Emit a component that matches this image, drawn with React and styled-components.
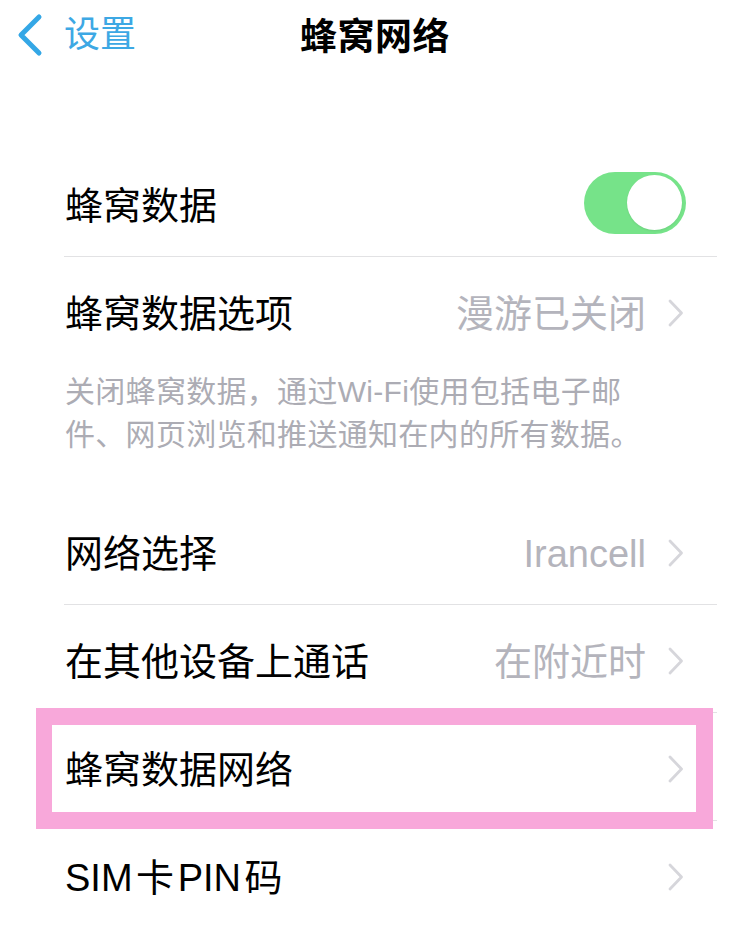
import * as React from 'react';
import styled, { createGlobalStyle } from 'styled-components';

const GlobalStyle = createGlobalStyle`
  html, body {
    margin: 0;
    padding: 0;
    background: #ffffff;
  }
  body {
    font-family: "Liberation Sans", "Noto Sans CJK SC", sans-serif;
    -webkit-font-smoothing: antialiased;
  }
`;

const Chevron = ({ color = '#d6d6db' }) => (
  <ChevronSvg viewBox='0 0 16 28' fill='none'>
    <path d='M2 2 L13.5 14 L2 26' stroke={color} strokeWidth='2.8' strokeLinecap='round' strokeLinejoin='round' />
  </ChevronSvg>
);

const BackArrow = () => (
  <BackSvg viewBox='0 0 28 44' fill='none'>
    <path d='M23 4 L5 22 L23 40' stroke='#34a7e6' strokeWidth='5' strokeLinecap='round' strokeLinejoin='round' />
  </BackSvg>
);

const Row = ({ label, value, chevron = true, toggle, last, highlighted }) => (
  <RowWrapper>
    <RowInner $last={last}>
      <Label>{label}</Label>
      <Trailing>
        {value && <Value>{value}</Value>}
        {toggle && (
          <Toggle>
            <Knob />
          </Toggle>
        )}
        {chevron && !toggle && <Chevron />}
      </Trailing>
    </RowInner>
    {highlighted && <Highlight />}
  </RowWrapper>
);

const App = () => {
  return (
    <Page>
      <GlobalStyle />
      <NavBar>
        <BackButton>
          <BackArrow />
          <BackText>设置</BackText>
        </BackButton>
        <Title>蜂窝网络</Title>
      </NavBar>

      <Group $top={81}>
        <Row label='蜂窝数据' toggle />
        <Row label='蜂窝数据选项' value='漫游已关闭' last />
      </Group>
      <Footer>
        关闭蜂窝数据，通过Wi-Fi使用包括电子邮件、网页浏览和推送通知在内的所有数据。
      </Footer>

      <Group $top={0}>
        <Row label='网络选择' value='Irancell' />
        <Row label='在其他设备上通话' value='在附近时' />
        <Row label='蜂窝数据网络' highlighted />
        <Row label='SIM 卡 PIN 码' last />
      </Group>
    </Page>
  );
};

export default App;

/* STYLED COMPONENTS */
const Page = styled.div`
  width: 750px;
  min-height: 933px;
  background: #ffffff;
  overflow: hidden;
`;

const NavBar = styled.div`
  position: relative;
  height: 68px;
  margin-bottom: 2px;
  display: flex;
  align-items: center;
  justify-content: center;
`;

const BackButton = styled.div`
  position: absolute;
  left: 16px;
  top: 0;
  height: 70px;
  display: flex;
  align-items: center;
  gap: 20px;
`;

const BackSvg = styled.svg`
  width: 28px;
  height: 44px;
`;

const BackText = styled.span`
  font-size: 36px;
  color: #3da8e4;
  line-height: 1;
`;

const Title = styled.h1`
  margin: 0;
  font-size: 37px;
  font-weight: 700;
  color: #000000;
  letter-spacing: 0.5px;
`;

const Group = styled.div`
  margin-top: ${(props) => props.$top}px;
  padding-left: 64px;
  padding-right: 33px;
`;

const RowWrapper = styled.div`
  position: relative;
`;

const RowInner = styled.div`
  height: 108px;
  box-sizing: border-box;
  display: flex;
  align-items: center;
  justify-content: space-between;
  border-bottom: ${(props) => (props.$last ? 'none' : '1.5px solid #e2e2e4')};
  padding-right: 33px;
`;

const Label = styled.span`
  padding: 6px 0 0 1px;
  font-size: 38px;
  line-height: 50px;
  color: #000000;
  word-spacing: -7px;
`;

const Trailing = styled.div`
  display: flex;
  align-items: center;
  gap: 22px;
`;

const Value = styled.span`
  padding-top: 6px;
  font-size: 38px;
  line-height: 50px;
  color: #b4b4bc;
`;

const ChevronSvg = styled.svg`
  width: 16px;
  height: 28px;
  margin-top: 4px;
`;

const Toggle = styled.div`
  width: 102px;
  height: 62px;
  margin-right: -2px;
  border-radius: 31px;
  background: #76e389;
  display: flex;
  align-items: center;
  justify-content: flex-end;
  padding: 0 4px;
  box-sizing: border-box;
`;

const Knob = styled.div`
  width: 55px;
  height: 55px;
  border-radius: 50%;
  background: #ffffff;
  box-shadow: 0 1px 2px rgba(0, 0, 0, 0.08);
`;

const Footer = styled.p`
  margin: 0;
  padding: 5px 0 41px 65px;
  width: 580px;
  font-size: 30px;
  line-height: 43px;
  letter-spacing: 0.3px;
  color: #acacb4;
`;

const Highlight = styled.div`
  position: absolute;
  left: -28px;
  right: 4px;
  top: -5px;
  bottom: -8px;
  border: 17px solid #f8a8da;
  border-left-width: 16px;
  pointer-events: none;
`;
